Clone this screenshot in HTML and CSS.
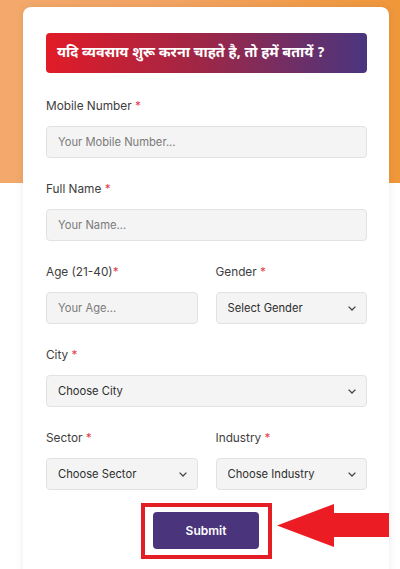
FILE: index.html
```html
<!DOCTYPE html>
<html lang="hi">
<head>
  <meta charset="UTF-8">
  <meta name="viewport" content="width=device-width, initial-scale=1.0">
  <title>Business Enquiry</title>
  <link rel="stylesheet" href="styles.css">
</head>
<body>
  <div class="card">
    <h2 class="banner">यदि व्यवसाय शुरू करना चाहते है, तो हमें बतायें ?</h2>
    <form class="form">
      <div class="group">
        <label>Mobile Number <span class="req">*</span></label>
        <input type="text" placeholder="Your Mobile Number...">
      </div>
      <div class="group">
        <label>Full Name <span class="req">*</span></label>
        <input type="text" placeholder="Your Name...">
      </div>
      <div class="group row">
        <div>
          <label>Age (21-40)<span class="req">*</span></label>
          <input type="text" placeholder="Your Age...">
        </div>
        <div>
          <label>Gender <span class="req">*</span></label>
          <div class="select">
            <select><option>Select Gender</option></select>
            <svg class="chev" viewBox="0 0 8 5" width="8" height="5"><polyline points="0.6,0.6 4,4 7.4,0.6" fill="none" stroke="#444" stroke-width="1.3"/></svg>
          </div>
        </div>
      </div>
      <div class="group">
        <label>City <span class="req">*</span></label>
        <div class="select">
          <select><option>Choose City</option></select>
          <svg class="chev" viewBox="0 0 8 5" width="8" height="5"><polyline points="0.6,0.6 4,4 7.4,0.6" fill="none" stroke="#444" stroke-width="1.3"/></svg>
        </div>
      </div>
      <div class="group row last">
        <div>
          <label>Sector <span class="req">*</span></label>
          <div class="select">
            <select><option>Choose Sector</option></select>
            <svg class="chev" viewBox="0 0 8 5" width="8" height="5"><polyline points="0.6,0.6 4,4 7.4,0.6" fill="none" stroke="#444" stroke-width="1.3"/></svg>
          </div>
        </div>
        <div>
          <label>Industry <span class="req">*</span></label>
          <div class="select">
            <select><option>Choose Industry</option></select>
            <svg class="chev" viewBox="0 0 8 5" width="8" height="5"><polyline points="0.6,0.6 4,4 7.4,0.6" fill="none" stroke="#444" stroke-width="1.3"/></svg>
          </div>
        </div>
      </div>
      <div class="submit-row">
        <div class="highlight">
          <button type="button" class="btn">Submit</button>
        </div>
        <svg class="arrow" viewBox="0 0 112 43" width="112" height="43">
          <polygon points="0,21.5 57,0 57,9 112,9 112,33 57,33 57,43" fill="#ec1c24"/>
        </svg>
      </div>
    </form>
  </div>
</body>
</html>
```

FILE: styles.css
```css
body {
  margin: 0;
  padding: 7px 0 0 0;
  font-family: Inter, "Open Sans", sans-serif;
  background: #fff linear-gradient(to right, #f4a96c 0%, #f3a462 45%, #f0973a 100%) no-repeat;
  background-size: 100% 183px;
  color: #3a3a3a;
}
.card {
  margin-left: 23px;
  width: 366px;
  box-sizing: border-box;
  padding: 26px 22px 20px 23px;
  background: #fff;
  border-radius: 8px;
  box-shadow: 0 0 8px rgba(0, 0, 0, 0.08);
}
.banner {
  margin: 0 0 23px 0;
  height: 40px;
  display: flex;
  align-items: center;
  padding-left: 11px;
  border-radius: 4px;
  background: linear-gradient(to right, #e21b27, #9c2748 50%, #4a357f);
  color: #fff;
  font-family: "Noto Sans Devanagari", "Noto Sans", sans-serif;
  font-size: 14.3px;
  font-weight: 700;
}
.group {
  margin-bottom: 21px;
}
.group.last {
  margin-bottom: 13px;
}
.row {
  display: grid;
  grid-template-columns: 1fr 1fr;
  gap: 18px;
}
label {
  display: block;
  font-size: 11.8px;
  line-height: 20px;
  margin-bottom: 10px;
  color: #3d3d3d;
}
.req {
  color: #e5404b;
}
input, select {
  display: block;
  width: 100%;
  height: 32px;
  box-sizing: border-box;
  padding: 0 11px;
  border: 1px solid #e2e2e2;
  border-radius: 4px;
  background: #f4f4f4;
  font-family: Inter, "Open Sans", sans-serif;
  font-size: 11.2px;
  color: #2e2e2e;
  outline: none;
}
select {
  appearance: none;
  -webkit-appearance: none;
}
input::placeholder {
  color: #7a7a7a;
}
.select {
  position: relative;
}
.chev {
  position: absolute;
  right: 11px;
  top: 14px;
  pointer-events: none;
}
.submit-row {
  position: relative;
  display: flex;
  justify-content: center;
}
.highlight {
  border: 4px solid #e31e24;
  padding: 5px 9px 6px 8px;
}
.btn {
  display: block;
  width: 106px;
  height: 37px;
  border: none;
  border-radius: 4px;
  background: #4a347c;
  color: #fff;
  font-family: Inter, "Open Sans", sans-serif;
  font-size: 12px;
  font-weight: 600;
  cursor: pointer;
}
.arrow {
  position: absolute;
  left: 231px;
  top: 1px;
}
```
